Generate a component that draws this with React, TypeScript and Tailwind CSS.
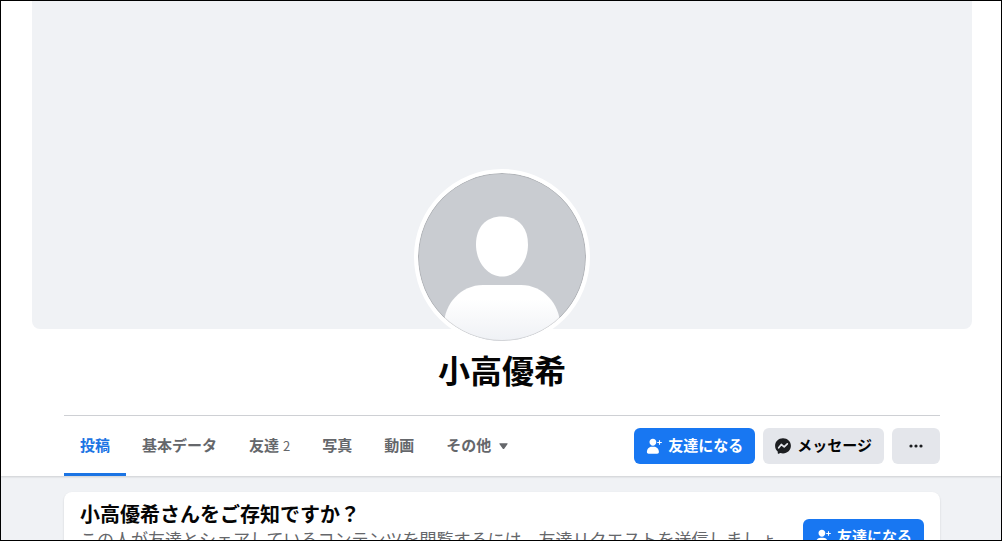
import React from 'react';
import clsx from 'clsx';

interface ProfileTab {
  id: string;
  label: string;
  count?: number;
}

const profileTabs: ProfileTab[] = [
  { id: 'posts', label: '投稿' },
  { id: 'about', label: '基本データ' },
  { id: 'friends', label: '友達', count: 2 },
  { id: 'photos', label: '写真' },
  { id: 'videos', label: '動画' }
];

const AddFriendIcon: React.FC = () => (
  <svg viewBox="0 0 16 16" className="h-4 w-4 shrink-0" fill="currentColor" aria-hidden="true">
    <path d="M6.900 .7c2 0 3.400 1.400 3.400 3.300 0 2-1.500 3.700-3.400 3.700S3.500 6 3.500 4C3.500 2.100 4.900.7 6.900.7z" />
    <path d="M.9 14C.9 11 3 8.700 5.600 8.700h2.600c2.600 0 4.700 2.300 4.700 5.300 0 1-.7 1.700-1.700 1.700H2.600C1.600 15.700.9 15 .9 14z" />
    <path d="M13.500 2.200v4.600M11.200 4.500h4.600" stroke="currentColor" strokeWidth="1.100" />
  </svg>
);

const MessengerIcon: React.FC = () => (
  <svg viewBox="0 0 16 16" className="h-4 w-4 shrink-0" aria-hidden="true">
    <path
      d="M8 .2C3.500.2.1 3.500.1 7.800c0 2.300.9 4.200 2.400 5.500.2.1.2.3.2.5l.1 1.400c0 .5.500.7.9.6l1.500-.7c.1-.1.3-.1.400 0 .8.200 1.500.3 2.400.3 4.500 0 7.900-3.300 7.900-7.600S12.500.2 8 .2z"
      fill="#1c1e21"
    />
    <path d="M3.700 9.800 6.300 6.500 9.200 8.800 12.300 5.800" fill="none" stroke="#e4e6eb" strokeWidth="1.700" strokeLinejoin="round" strokeLinecap="round" />
  </svg>
);

const AddFriendButton: React.FC = () => (
  <button type="button" className="flex h-9 shrink-0 items-center gap-1.5 rounded-md bg-[#1877f2] px-3 text-[15px] font-bold whitespace-nowrap text-white">
    <AddFriendIcon />
    <span className="pb-0.5">友達になる</span>
  </button>
);

const Avatar: React.FC = () => (
  <svg viewBox="0 0 168 168" className="relative -mt-40 h-44 w-44 rounded-full border-4 border-white bg-white" role="img" aria-label="小高優希">
    <defs>
      <linearGradient id="shoulders" x1="0" y1="0" x2="0" y2="1">
        <stop offset="0.250" stopColor="#ffffff" />
        <stop offset="1" stopColor="#eff1f5" />
      </linearGradient>
      <clipPath id="circle">
        <circle cx="84" cy="84" r="84" />
      </clipPath>
    </defs>
    <g clipPath="url(#circle)">
      <rect width="168" height="168" fill="#c9ccd1" />
      <path d="M84 43.500c16 0 26 10.500 26 28C110 89 98.500 103.500 84 103.500S58 89 58 71.500c0-17.500 10-28 26-28z" fill="#fff" />
      <path d="M26 152c0-21 17-40 39-40h38c22 0 39 19 39 40v16H26z" fill="url(#shoulders)" />
    </g>
    <circle cx="84" cy="84" r="83.500" fill="none" stroke="#000" strokeOpacity="0.120" />
  </svg>
);

const ProfileHeader: React.FC = () => (
  <header className="bg-white pl-0.5 shadow-[0_1px_2px_rgba(0,0,0,0.15)]">
    <div className="mx-auto flex max-w-[940px] flex-col items-center">
      <div className="h-[328px] w-full rounded-b-lg bg-[#f0f2f5]" />
      <Avatar />
      <h1 className="mt-1 mb-[26px] text-[32px] leading-10 font-bold text-[#050505]">小高優希</h1>
      <div className="w-full px-8">
        <div className="flex h-[61px] items-center justify-between border-t border-[#ced0d4]">
          <nav className="flex h-full text-[15px] font-bold text-[#65676b]">
            {profileTabs.map((tab, index) => (
              <a
                key={tab.id}
                href={`#${tab.id}`}
                className={clsx(
                  'flex items-center gap-1 border-b-3 px-4 pt-0.5 whitespace-nowrap',
                  index === 0 ? 'border-[#1b74e4] text-[#1b74e4]' : 'border-transparent'
                )}
              >
                {tab.label}
                {tab.count && <span className="text-[13px] font-normal">{tab.count}</span>}
              </a>
            ))}
            <button type="button" className="flex items-center gap-2 border-b-3 border-transparent px-4 pt-0.5 whitespace-nowrap">
              その他
              <svg viewBox="0 0 10 8" className="h-2 w-2.5" fill="currentColor" aria-hidden="true">
                <path d="M1 1.200h7c.6 0 .8.600.4 1L5.200 6.700c-.4.500-1 .5-1.400 0L.6 2.200c-.4-.4-.2-1 .4-1z" />
              </svg>
            </button>
          </nav>
          <div className="flex gap-2">
            <AddFriendButton />
            <button type="button" className="flex h-9 items-center gap-1.5 rounded-md bg-[#e4e6eb] px-3 text-[15px] font-bold whitespace-nowrap text-[#050505]">
              <MessengerIcon />
              <span className="pb-0.5">メッセージ</span>
            </button>
            <button type="button" aria-label="その他" className="flex h-9 items-center rounded-md bg-[#e4e6eb] px-4 text-[#1c1e21]">
              <svg viewBox="0 0 16 16" className="h-4 w-4" fill="currentColor" aria-hidden="true">
                <circle cx="3" cy="8" r="1.600" />
                <circle cx="8" cy="8" r="1.600" />
                <circle cx="13" cy="8" r="1.600" />
              </svg>
            </button>
          </div>
        </div>
      </div>
    </div>
  </header>
);

const App: React.FC = () => (
  <div className="h-screen overflow-hidden border border-black bg-[#f0f2f5] font-['Noto_Sans_CJK_JP',sans-serif]" lang="ja">
    <ProfileHeader />
    <main className="mx-auto max-w-[942px] pt-4 pr-8 pl-8.5">
      <section className="flex items-center gap-4 rounded-lg bg-white px-4 py-2.5 shadow-[0_1px_2px_rgba(0,0,0,0.15)]">
        <div className="flex flex-1 flex-col gap-0.5">
          <h2 className="text-xl leading-6 font-bold text-[#050505]">小高優希さんをご存知ですか？</h2>
          <p className="text-[17px] leading-[22px] text-[#65676b]">
            この人が友達とシェアしているコンテンツを閲覧するには、友達リクエストを送信しましょう。
          </p>
        </div>
        <AddFriendButton />
      </section>
    </main>
  </div>
);

export default App;
